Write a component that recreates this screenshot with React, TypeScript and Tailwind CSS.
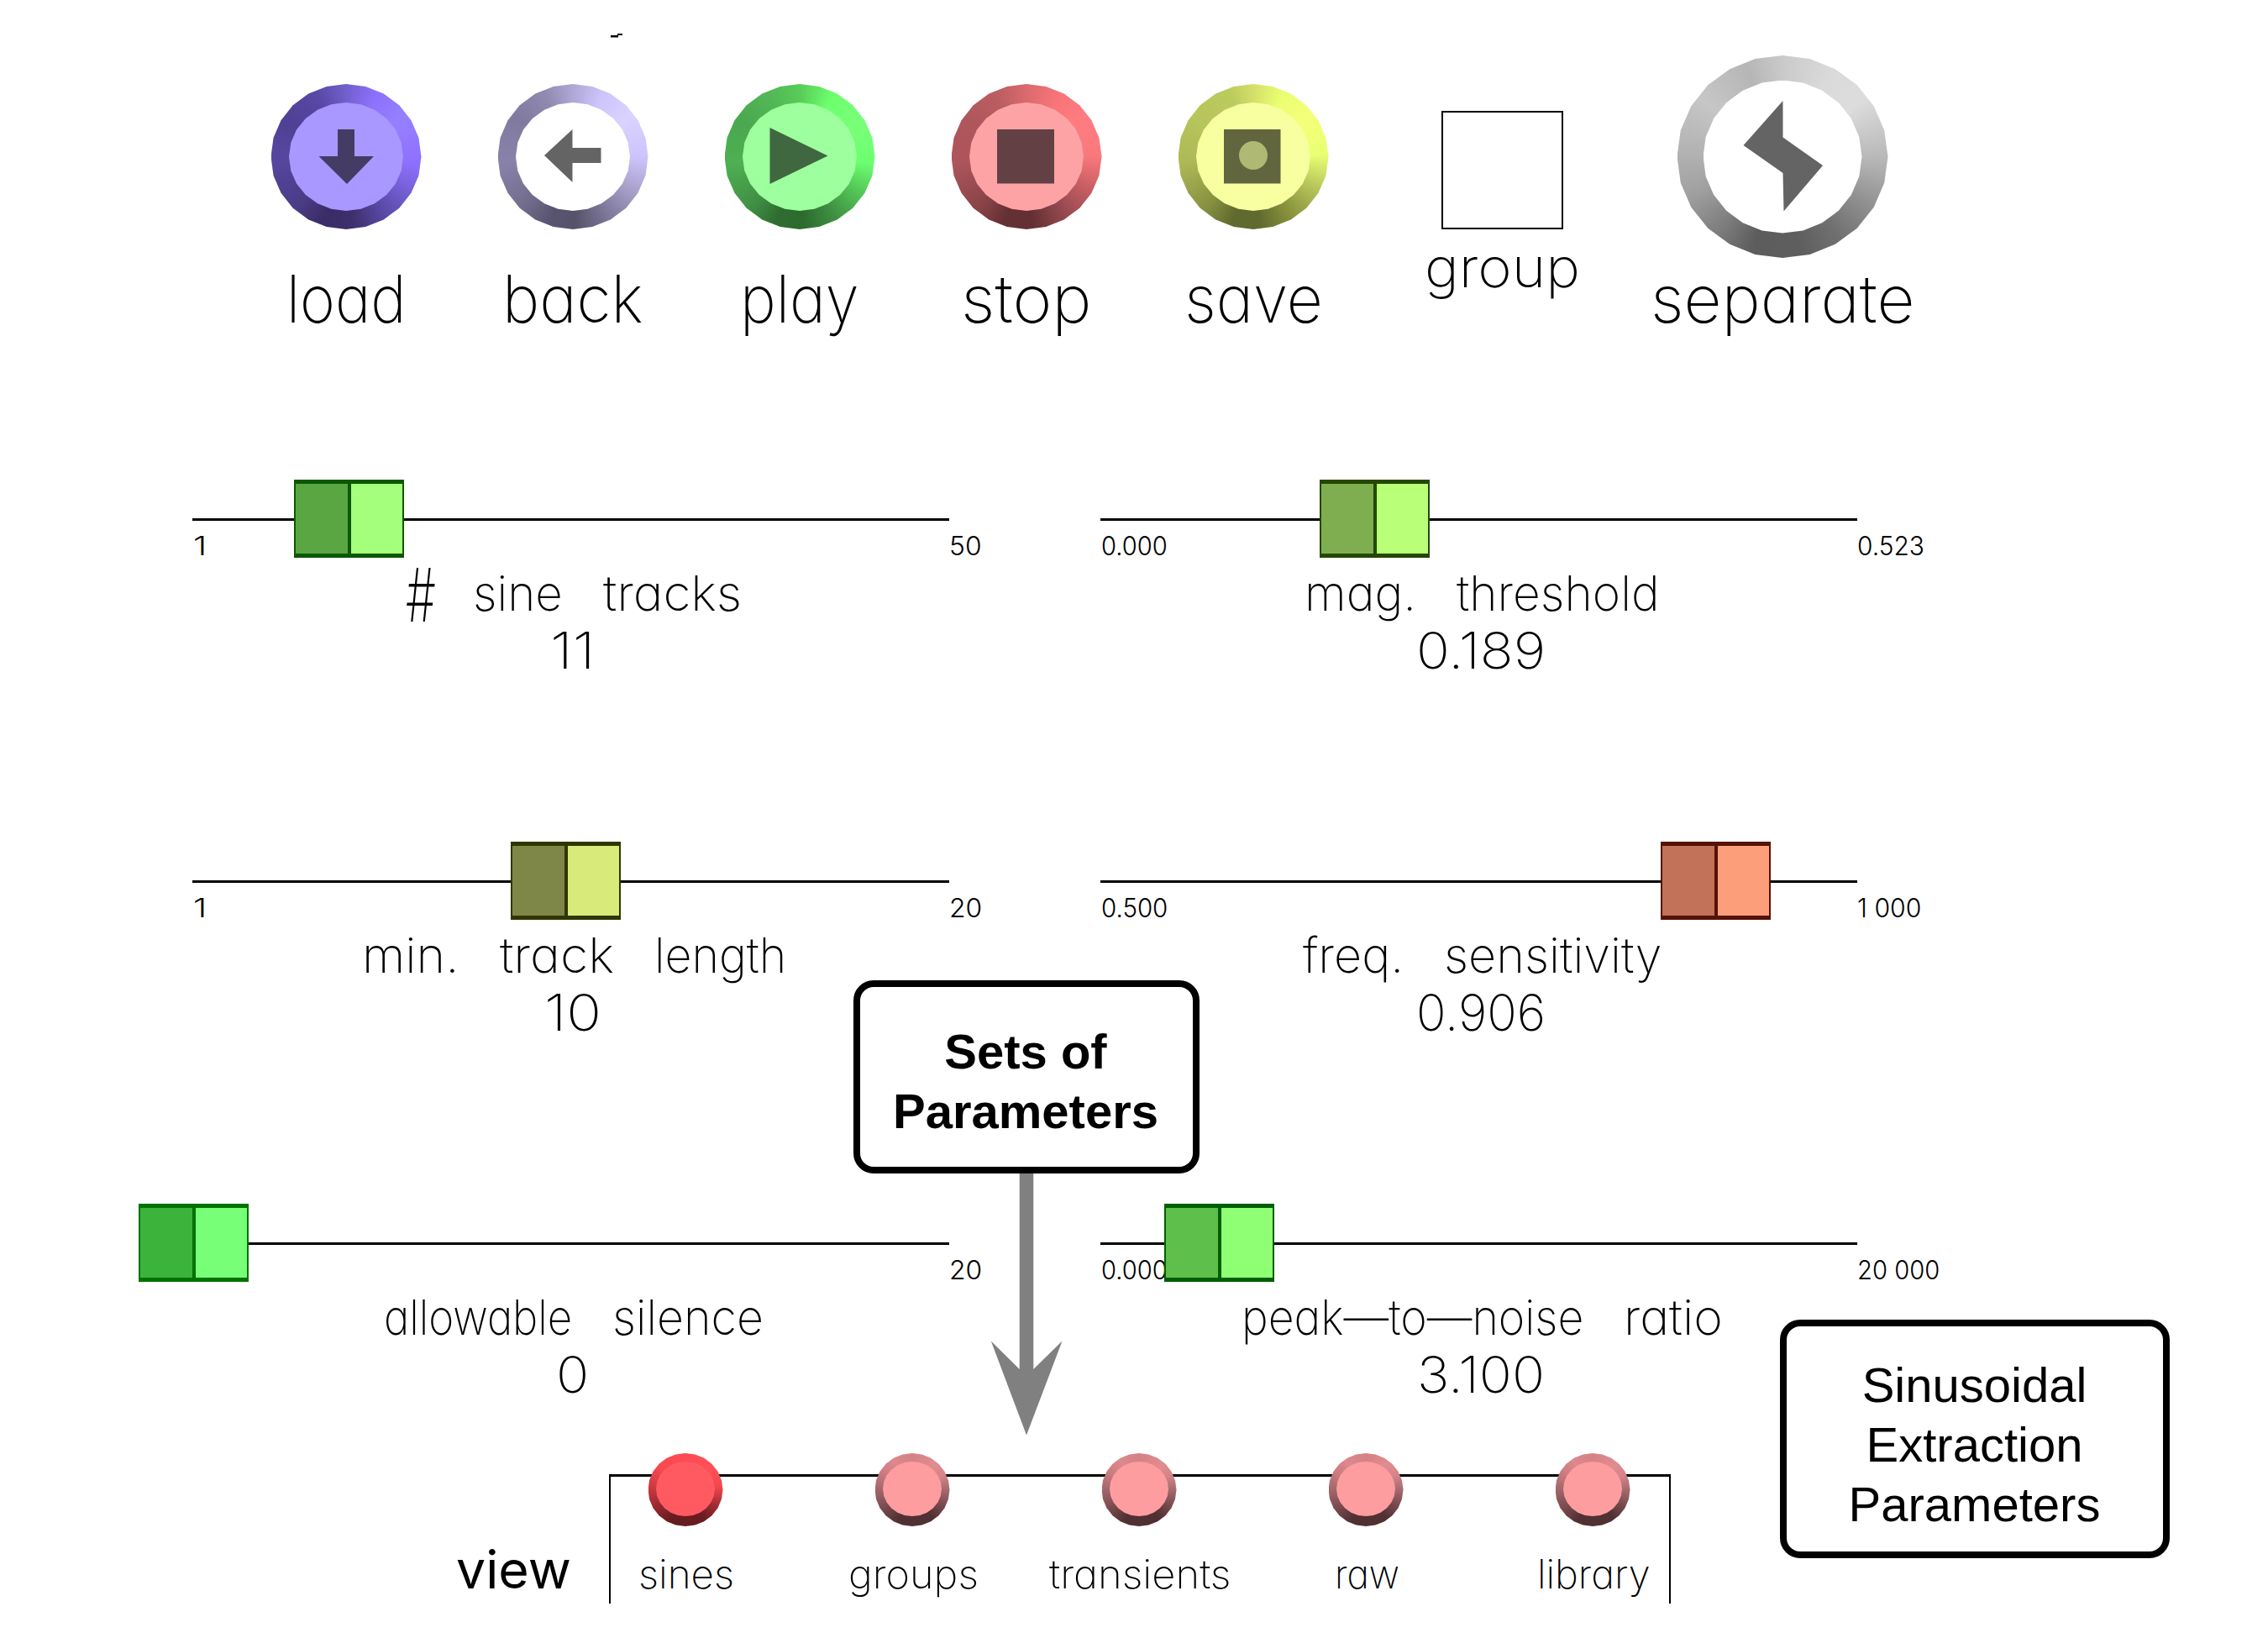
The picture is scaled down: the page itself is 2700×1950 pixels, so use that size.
import { useLayoutEffect, useRef, type ReactNode } from "react";

const SIDES = 24;
const FACET = `polygon(${Array.from({ length: SIDES }, (_, i) => {
  const a = (i / SIDES) * Math.PI * 2;
  return `${(50 + 50 * Math.sin(a)).toFixed(2)}% ${(50 - 50 * Math.cos(a)).toFixed(2)}%`;
}).join(",")})`;

/* Thin label whose glyphs are stretched to fill a given width. */
function Word({ w, className = "", children }: { w: number; className?: string; children: ReactNode }) {
  const ref = useRef<HTMLSpanElement>(null);
  useLayoutEffect(() => {
    const el = ref.current;
    if (el) el.style.transform = `scaleX(${w / el.offsetWidth})`;
  }, [w]);
  return (
    <span className={`block shrink-0 whitespace-nowrap leading-none ${className}`} style={{ width: w }}>
      <span ref={ref} className="inline-block origin-left align-top">
        {children}
      </span>
    </span>
  );
}

function Knob({ size, inner, ring, face, children }: { size: string; inner: string; ring: string; face: string; children?: ReactNode }) {
  return (
    <div className={`relative flex shrink-0 items-center justify-center ${size} ${ring}`} style={{ clipPath: FACET }}>
      <div className={`${inner} ${face}`} style={{ clipPath: FACET }} />
      {children}
    </div>
  );
}

const RINGS = {
  load: "bg-[conic-gradient(#7260cc_0deg,#8c70fc_25deg,#9680ff_55deg,#8e70ff_95deg,#7a63de_115deg,#5b4aa8_145deg,#3d2f6b_175deg,#3a2c66_200deg,#4b3c86_225deg,#5646a0_270deg,#504094_300deg,#5948a6_335deg,#7260cc_360deg)]",
  back: "bg-[conic-gradient(#b0a8d6_0deg,#cdc4fb_25deg,#dad3ff_55deg,#cdc4fc_90deg,#a8a0ca_120deg,#7d7798_150deg,#57526b_178deg,#585370_200deg,#726c8c_225deg,#8882aa_265deg,#817a9f_305deg,#9089b0_335deg,#b0a8d6_360deg)]",
  play: "bg-[conic-gradient(#58cc58_0deg,#6dff6d_28deg,#78ff78_60deg,#6dff70_95deg,#55c858_120deg,#3f8f42_150deg,#2c6a2e_178deg,#2e6c30_200deg,#409044_225deg,#4eb052_265deg,#4aa84e_300deg,#52b856_335deg,#58cc58_360deg)]",
  stop: "bg-[conic-gradient(#db6a6f_0deg,#f67478_25deg,#ff7d80_55deg,#f8787c_90deg,#cc6066_115deg,#964a50_145deg,#653034_175deg,#653034_200deg,#884347_222deg,#ad555b_265deg,#ae565c_300deg,#bc5e62_335deg,#db6a6f_360deg)]",
  save: "bg-[conic-gradient(#d4e06a_0deg,#eaff70_25deg,#f5ff7a_55deg,#eaff72_88deg,#bac85c_115deg,#8c963e_145deg,#616a2e_175deg,#616a2e_198deg,#858f40_222deg,#adb956_265deg,#b6c45c_300deg,#bccb5e_340deg,#d4e06a_360deg)]",
  separate: "bg-[conic-gradient(#cacaca_0deg,#dadada_30deg,#dcdcdc_55deg,#b9b9b9_90deg,#929292_118deg,#707070_145deg,#5e5e5e_170deg,#5c5c5c_198deg,#7c7c7c_220deg,#a0a0a0_248deg,#b2b2b2_272deg,#c6c6c6_305deg,#b6b6b6_338deg,#cacaca_360deg)]",
  active: "bg-[conic-gradient(#ff4a54_0deg,#ff5058_50deg,#f2464e_85deg,#a82e34_115deg,#661c20_150deg,#661c20_205deg,#98282e_240deg,#cc3a42_275deg,#f84850_310deg,#ff4a54_360deg)]",
  idle: "bg-[conic-gradient(#d48286_0deg,#e28c90_40deg,#d48488_65deg,#a66a6e_90deg,#7c4c50_115deg,#503032_145deg,#503032_205deg,#7c4c50_240deg,#a2666a_270deg,#cc7c80_300deg,#dc888c_325deg,#d48286_360deg)]",
};

function Tool({ w, label, ring, face, children }: { w: number; label: string; ring: string; face: string; children: ReactNode }) {
  return (
    <div className="mt-[100px] flex w-[270px] flex-col items-center">
      <Knob size="h-[173px] w-[179px]" inner="h-[129px] w-[136px]" ring={ring} face={face}>
        <svg className="absolute inset-0 h-[173px] w-[179px]" viewBox="0.5 0 179 173">
          {children}
        </svg>
      </Knob>
      <Word w={w} className="mt-[44px] text-[78px]">
        {label}
      </Word>
    </div>
  );
}

type SliderProps = {
  thumb: number;
  edge: string;
  left: string;
  right: string;
  min?: [string, number];
  max: [string, number];
  label: [string, number][];
  value: [string, number];
};

function Slider({ thumb, edge, left, right, min, max, label, value }: SliderProps) {
  return (
    <div className="relative flex w-[901px] flex-col items-center">
      <div className="flex h-[95px] w-full items-center">
        <div className="h-[3px] w-full bg-black" />
      </div>
      <div className={`absolute top-0 z-10 flex h-[93px] w-[131px] border-x-[2px] border-y-[5px] ${edge}`} style={{ left: thumb }}>
        <div className={`flex-1 border-r-[4px] ${edge} ${left}`} />
        <div className={`w-[61px] ${right}`} />
      </div>
      <div className="-mt-[32px] flex h-[32px] w-full justify-between text-[31px] font-light">
        <div className="pl-px">{min && <Word w={min[1]}>{min[0]}</Word>}</div>
        <div className="w-0">
          <Word w={max[1]}>{max[0]}</Word>
        </div>
      </div>
      <div className="mt-[11px] flex h-[58px] items-center gap-[48px] pl-[7px] text-[58px]">
        {label.map(([t, w]) => (
          <Word key={t} w={w} className={t === "#" ? "-mr-1 pt-1 text-[88px]" : ""}>
            {t}
          </Word>
        ))}
      </div>
      <Word w={value[1]} className="ml-[4px] mt-[9px] text-[60px]">
        {value[0]}
      </Word>
    </div>
  );
}

const VIEWS: [string, number][] = [
  ["sines", 114],
  ["groups", 155],
  ["transients", 217],
  ["raw", 77],
  ["library", 135],
];

export default function App() {
  return (
    <div className="relative h-[1950px] w-[2700px] overflow-hidden bg-white font-['Inter',sans-serif] font-extralight text-black [font-feature-settings:'cv11','ss03']">
      <header className="flex h-[571px] items-start pl-[277px]">
        <Tool w={142} label="load" ring={RINGS.load} face="bg-[#a998ff]">
          <path fill="#453c66" d="M79.500 54h20v32h23L90.500 119 57 86h22.500z" />
        </Tool>
        <Tool w={168} label="back" ring={RINGS.back} face="bg-white">
          <path fill="#646464" d="M55.500 85 89 54v22h34v18H89v23z" />
        </Tool>
        <Tool w={142} label="play" ring={RINGS.play} face="bg-[#9eff9e]">
          <path fill="#3f6740" d="M54 52 123 85.500 54 119z" />
        </Tool>
        <Tool w={156} label="stop" ring={RINGS.stop} face="bg-[#fda3a6]">
          <path fill="#624044" d="M54.500 54h68v64.500h-68z" />
        </Tool>
        <Tool w={165} label="save" ring={RINGS.save} face="bg-[#f8ffa0]">
          <path fill="#62663f" d="M54.500 54h67.500v64.500h-67.500z" />
          <circle cx="89.500" cy="85" r="17" fill="#b0b974" />
        </Tool>
        <div className="mt-[132px] flex w-[323px] flex-col items-center">
          <div className="h-[141px] w-[145px] border-[2.500px] border-black" />
          <Word w={185} className="mt-[12px] text-[66px]">
            group
          </Word>
        </div>
        <div className="mt-[66px] flex w-[344px] flex-col items-center">
          <Knob size="h-[241px] w-[251px]" inner="h-[182px] w-[189px]" ring={RINGS.separate} face="bg-white">
            <svg className="absolute inset-0 h-[241px] w-[251px]" viewBox="0 0 251 241">
              <path fill="#646464" d="M125.500 54v43.500L173 131l-46.500 54.500-1-45.500L78.500 107z" />
            </svg>
          </Knob>
          <Word w={314} className="mt-[10px] text-[78px]">
            separate
          </Word>
        </div>
      </header>

      <main className="grid h-[1159px] grid-cols-[901px_901px] grid-rows-[431px_431px_297px] gap-x-[180px] pl-[229px]">
        <Slider thumb={121} edge="border-[#0c5800]" left="bg-[#5aa642]" right="bg-[#a4ff7c]" min={["1", 16]} max={["50", 39]} label={[["#", 36], ["sine", 107], ["tracks", 165]]} value={["11", 54]} />
        <Slider thumb={261} edge="border-[#244800]" left="bg-[#7fae50]" right="bg-[#b9ff78]" min={["0.000", 79]} max={["0.523", 80]} label={[["mag.", 133], ["threshold", 242]]} value={["0.189", 154]} />
        <Slider thumb={379} edge="border-[#303600]" left="bg-[#7f8748]" right="bg-[#d7ea7a]" min={["1", 16]} max={["20", 39]} label={[["min.", 116], ["track", 136], ["length", 157]]} value={["10", 68]} />
        <Slider thumb={667} edge="border-[#561204]" left="bg-[#c27258]" right="bg-[#fc9e7a]" min={["0.500", 79]} max={["1 000", 76]} label={[["freq.", 120], ["sensitivity", 259]]} value={["0.906", 154]} />
        <Slider thumb={-64} edge="border-[#007200]" left="bg-[#3cb43c]" right="bg-[#78ff78]" max={["20", 39]} label={[["allowable", 224], ["silence", 180]]} value={["0", 39]} />
        <Slider thumb={76} edge="border-[#005e00]" left="bg-[#5ec04a]" right="bg-[#8fff74]" min={["0.000", 79]} max={["20 000", 98]} label={[["peak—to—noise", 407], ["ratio", 118]]} value={["3.100", 152]} />
      </main>

      <section className="flex h-[220px] items-start pl-[543px]">
        <Word w={137} className="mt-[107px] text-[63px] font-normal">
          view
        </Word>
        <div className="ml-[45px] mt-[25px] flex h-[154px] w-[1264px] border-x-2 border-t-[3px] border-black">
          <div className="-ml-[46px] -mt-[28px] flex">
            {VIEWS.map(([name, w], i) => (
              <div key={name} className="flex w-[270px] flex-col items-center">
                <Knob size="h-[87px] w-[89px]" inner="-mt-[2px] h-[65px] w-[70px]" ring={i === 0 ? RINGS.active : RINGS.idle} face={i === 0 ? "bg-[#ff5a62]" : "bg-[#fd9da0]"} />
                <Word w={w} className="ml-[2px] mt-[33px] text-[48px]">
                  {name}
                </Word>
              </div>
            ))}
          </div>
        </div>
      </section>

      <svg className="absolute left-[727px] top-[40px] h-[5px] w-[14px]" viewBox="0 0 14 5">
        <path d="M0 2h8V0h6v2H9v2.500H0z" />
      </svg>

      <div className="absolute left-[1016px] top-[1167px] flex w-[412px] flex-col items-center">
        <div className="z-10 flex h-[230px] w-full flex-col items-center rounded-[24px] border-[8px] border-black bg-white pr-[2px] pt-[41px] text-center font-['Liberation_Sans',sans-serif] text-[58px] font-bold leading-[71px]">
          <div>Sets of</div>
          <div>Parameters</div>
        </div>
        <svg className="h-[312px] w-[86px]" viewBox="0 0 86 312">
          <path fill="#808080" d="M34.700 0h16.600v233L85.500 199.500 43 311.500.800 199.500 34.700 233z" />
        </svg>
      </div>

      <div className="absolute left-[2119px] top-[1571px] flex h-[284px] w-[464px] flex-col items-center rounded-[24px] border-[8px] border-black bg-white pr-[1px] pt-[34px] font-['Liberation_Sans',sans-serif] text-[58px] font-normal leading-[71px]">
        <div>Sinusoidal</div>
        <div>Extraction</div>
        <div>Parameters</div>
      </div>
    </div>
  );
}
